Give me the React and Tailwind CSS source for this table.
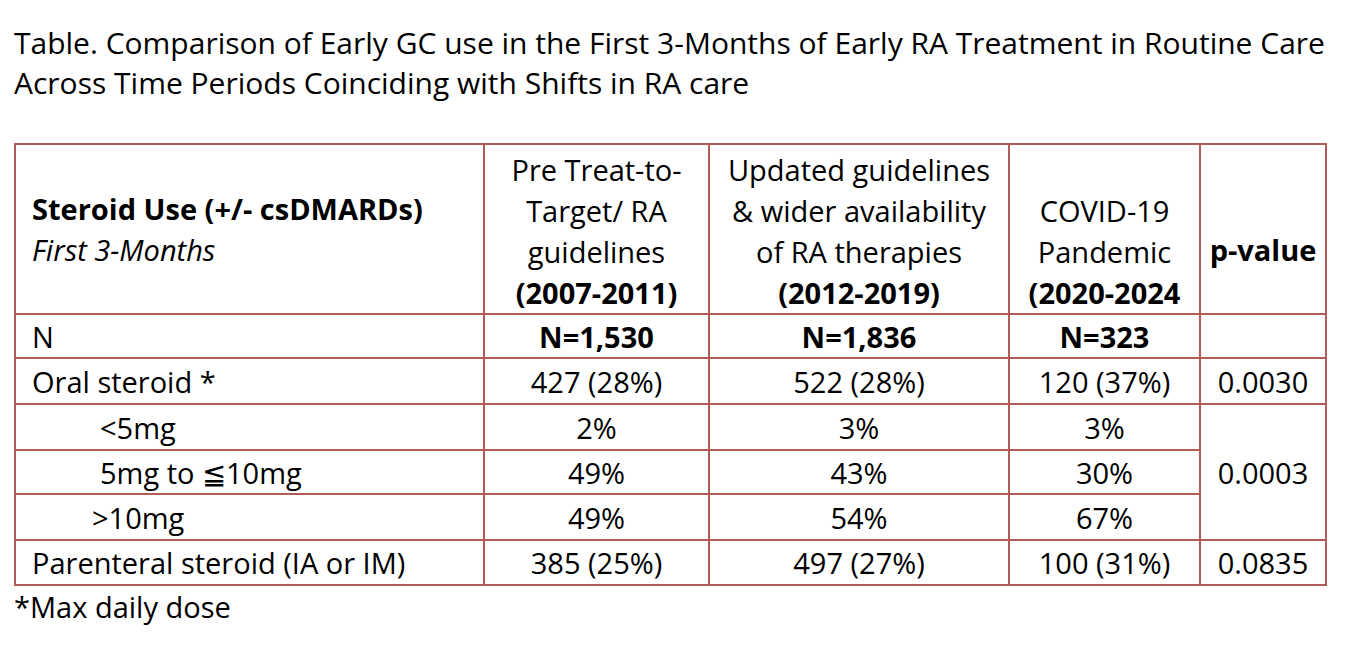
const border = 'border-2 border-[#b35c57]'

const rows = [
  { label: 'Oral steroid *', indent: 'pl-[16px]', a: '427 (28%)', b: '522 (28%)', c: '120 (37%)', p: '0.0030', h: 'h-[46px]' },
]

export default function App() {
  const cell = `${border} text-center align-middle`
  return (
    <div
      className="min-h-[668px] bg-white pl-[14px] pt-[23px] text-black"
      style={{ fontFamily: '"Open Sans", Lato, sans-serif' }}
    >
      <p className="text-[30px] leading-[40px]">
        <span className="block whitespace-nowrap">
          Table. Comparison of Early GC use in the First 3-Months of Early RA Treatment in Routine Care
        </span>
        <span className="block whitespace-nowrap">
          Across Time Periods Coinciding with Shifts in RA care
        </span>
      </p>

      <table className="mt-[40px] w-[1311px] table-fixed border-collapse text-[29px] leading-[41px]">
        <colgroup>
          <col className="w-[469px]" />
          <col className="w-[225px]" />
          <col className="w-[300px]" />
          <col className="w-[191px]" />
          <col className="w-[126px]" />
        </colgroup>
        <thead>
          <tr className="h-[170px]">
            <th className={`${border} pb-[43px] pl-[16px] text-left align-bottom font-normal`}>
              <span className="block font-bold">Steroid Use (+/- csDMARDs)</span>
              <span className="block italic">First 3-Months</span>
            </th>
            <th className={`${border} text-center align-bottom font-normal`}>
              <span className="block">Pre Treat-to-</span>
              <span className="block">Target/ RA</span>
              <span className="block">guidelines</span>
              <span className="block font-bold">(2007-2011)</span>
            </th>
            <th className={`${border} text-center align-bottom font-normal`}>
              <span className="block whitespace-nowrap">Updated guidelines</span>
              <span className="block whitespace-nowrap">&amp; wider availability</span>
              <span className="block">of RA therapies</span>
              <span className="block font-bold">(2012-2019)</span>
            </th>
            <th className={`${border} text-center align-bottom font-normal`}>
              <span className="block">COVID-19</span>
              <span className="block">Pandemic</span>
              <span className="block whitespace-nowrap font-bold">(2020-2024</span>
            </th>
            <th className={`${border} pb-[43px] text-center align-bottom font-bold`}>p-value</th>
          </tr>
        </thead>
        <tbody>
          <tr className="h-[44px]">
            <td className={`${border} pl-[16px] align-middle`}>N</td>
            <td className={`${cell} font-bold`}>N=1,530</td>
            <td className={`${cell} font-bold`}>N=1,836</td>
            <td className={`${cell} font-bold`}>N=323</td>
            <td className={cell}></td>
          </tr>
          {rows.map((r) => (
            <tr key={r.label} className={r.h}>
              <td className={`${border} ${r.indent} align-middle`}>{r.label}</td>
              <td className={cell}>{r.a}</td>
              <td className={cell}>{r.b}</td>
              <td className={cell}>{r.c}</td>
              <td className={cell}>{r.p}</td>
            </tr>
          ))}
          <tr className="h-[46px]">
            <td className={`${border} pl-[84px] align-middle`}>&lt;5mg</td>
            <td className={cell}>2%</td>
            <td className={cell}>3%</td>
            <td className={cell}>3%</td>
            <td rowSpan={3} className={cell}>0.0003</td>
          </tr>
          <tr className="h-[44px]">
            <td className={`${border} pl-[84px] align-middle`}>5mg to ≦10mg</td>
            <td className={cell}>49%</td>
            <td className={cell}>43%</td>
            <td className={cell}>30%</td>
          </tr>
          <tr className="h-[46px]">
            <td className={`${border} pl-[76px] align-middle`}>&gt;10mg</td>
            <td className={cell}>49%</td>
            <td className={cell}>54%</td>
            <td className={cell}>67%</td>
          </tr>
          <tr className="h-[45px]">
            <td className={`${border} pl-[16px] align-middle`}>Parenteral steroid (IA or IM)</td>
            <td className={cell}>385 (25%)</td>
            <td className={cell}>497 (27%)</td>
            <td className={cell}>100 (31%)</td>
            <td className={cell}>0.0835</td>
          </tr>
        </tbody>
      </table>

      <p className="text-[29px] leading-[41px]">*Max daily dose</p>
    </div>
  )
}
